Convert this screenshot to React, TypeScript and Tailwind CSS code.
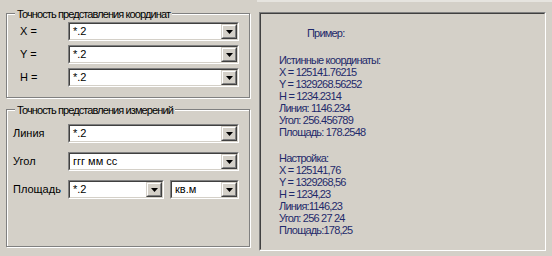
const face = "bg-[#d4d0c8]";

function Combo({ value, className = "" }: { value: string; className?: string }) {
  return (
    <div className={`h-[19px] border border-t-[#808080] border-l-[#808080] border-b-white border-r-white ${className}`}>
      <div className="flex h-full border border-t-[#404040] border-l-[#404040] border-b-[#d4d0c8] border-r-[#d4d0c8] bg-white">
        <span className="flex-1 pl-[3px] leading-[15px] text-black">{value}</span>
        <div className={`w-[16px] h-full border border-t-[#d4d0c8] border-l-[#d4d0c8] border-b-[#404040] border-r-[#404040] ${face}`}>
          <div className="flex h-full items-center justify-center border border-t-white border-l-white border-b-[#808080] border-r-[#808080]">
            <svg width="7" height="4" viewBox="0 0 7 4">
              <path d="M0 0h7L3.5 4z" fill="#000" />
            </svg>
          </div>
        </div>
      </div>
    </div>
  );
}

function GroupBox({ title, className = "", children }: { title: string; className?: string; children: React.ReactNode }) {
  return (
    <div className={`relative w-[244px] border border-[#808080] shadow-[inset_1px_1px_0_#fff,1px_1px_0_#fff] ${className}`}>
      <span className={`absolute left-[8px] -top-[6px] px-[2px] leading-[13px] tracking-[-0.9px] text-black ${face}`}>
        {title}
      </span>
      {children}
    </div>
  );
}

export default function App() {
  const truth = [
    "Истинные координаты:",
    "X = 125141.76215",
    "Y = 1329268.56252",
    "H = 1234.2314",
    "Линия: 1146.234",
    "Угол: 256.456789",
    "Площадь: 178.2548",
  ];
  const setup = [
    "Настройка:",
    "X = 125141,76",
    "Y = 1329268,56",
    "H = 1234,23",
    "Линия:1146,23",
    "Угол: 256 27 24",
    "Площадь:178,25",
  ];

  return (
    <div className={`flex w-[552px] h-[256px] overflow-hidden ${face} font-['Liberation_Sans',Arial,sans-serif] text-[11px]`}>
      {/* Left: precision settings */}
      <div className="w-[257px] pl-[6px] pt-[13px]">
        <GroupBox title="Точность представления координат" className="h-[85px]">
          <div className="flex flex-col gap-[4px] pt-[8px] pl-[13px]">
            {["X =", "Y =", "H ="].map((label) => (
              <div key={label} className="flex items-center">
                <span className="w-[48px] text-black">{label}</span>
                <Combo value="*.2" className="w-[171px]" />
              </div>
            ))}
          </div>
        </GroupBox>

        <GroupBox title="Точность представления измерений" className="mt-[11px] h-[138px]">
          <div className="flex flex-col gap-[9px] pt-[14px] pl-[6px]">
            <div className="flex items-center">
              <span className="w-[55px] text-black">Линия</span>
              <Combo value="*.2" className="w-[171px]" />
            </div>
            <div className="flex items-center">
              <span className="w-[55px] text-black">Угол</span>
              <Combo value="ггг мм сс" className="w-[171px]" />
            </div>
            <div className="flex items-center">
              <span className="w-[55px] text-black">Площадь</span>
              <Combo value="*.2" className="w-[96px]" />
              <Combo value="кв.м" className="ml-[6px] w-[69px]" />
            </div>
          </div>
        </GroupBox>
      </div>

      {/* Right: example panel */}
      <div className="flex-1 border-t-2 border-[#e6e4df] pt-[10px] pl-[2px]">
        <div className="w-[287px] h-[239px] border border-t-[#808080] border-l-[#808080] border-b-white border-r-white">
          <div className="h-full border border-t-[#404040] border-l-[#404040] border-b-[#d4d0c8] border-r-[#d4d0c8] pt-[13px] pl-[18px] leading-[12px] tracking-[-0.8px] text-[#1f2a6b]">
            <div className="ml-[28px]">Пример:</div>
            <div className="mt-[15px]">
              {truth.map((line) => (
                <div key={line}>{line}</div>
              ))}
            </div>
            <div className="mt-[14px]">
              {setup.map((line) => (
                <div key={line}>{line}</div>
              ))}
            </div>
          </div>
        </div>
      </div>
    </div>
  );
}
